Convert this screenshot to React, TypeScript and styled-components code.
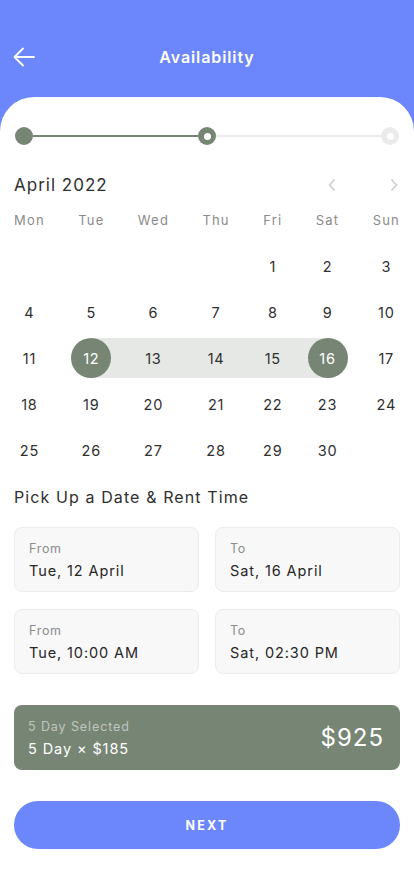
import styled, { createGlobalStyle } from "styled-components";

const BLUE = "#6c86fc";
const GREEN = "#768574";

const GlobalStyle = createGlobalStyle`
  * { box-sizing: border-box; }
  body {
    margin: 0;
    background: ${BLUE};
    font-family: Inter, "Noto Sans", sans-serif;
    color: #2b2b2b;
  }
`;

const Page = styled.div`
  width: 414px;
  min-height: 896px;
  background: ${BLUE};
  display: flex;
  flex-direction: column;
`;

const Header = styled.header`
  height: 97px;
  display: flex;
  align-items: center;
  justify-content: center;
  position: relative;
  padding-top: 17px;
`;

const BackButton = styled.button`
  position: absolute;
  left: 12px;
  top: 46px;
  width: 24px;
  height: 22px;
  padding: 0;
  border: none;
  background: transparent;
  display: flex;
  align-items: center;
  justify-content: center;
`;

const Title = styled.h1`
  margin: 0;
  font-size: 16px;
  font-weight: 600;
  letter-spacing: 0.9px;
  color: #fff;
`;

const Sheet = styled.main`
  flex: 1;
  background: #fff;
  border-radius: 34px 34px 0 0;
  padding: 29px 14px 40px;
`;

const Stepper = styled.div`
  display: flex;
  align-items: center;
  height: 20px;
  padding: 0 1px;
`;

const Dot = styled.span<{ $tone: "done" | "current" | "todo" }>`
  width: 18px;
  height: 18px;
  border-radius: 50%;
  flex-shrink: 0;
  display: flex;
  align-items: center;
  justify-content: center;
  background: ${(p) => (p.$tone === "todo" ? "#ebebeb" : GREEN)};
  &::after {
    content: "";
    width: 7px;
    height: 7px;
    border-radius: 50%;
    background: #fff;
    display: ${(p) => (p.$tone === "done" ? "none" : "block")};
  }
`;

const Line = styled.span<{ $done?: boolean }>`
  flex: 1;
  height: 2px;
  background: ${(p) => (p.$done ? GREEN : "#ebebeb")};
`;

const MonthRow = styled.div`
  display: flex;
  align-items: center;
  justify-content: space-between;
  margin-top: 29px;
`;

const MonthTitle = styled.h2`
  margin: 0;
  font-size: 17px;
  font-weight: 400;
  letter-spacing: 1px;
  color: #2f2f2f;
`;

const NavGroup = styled.div`
  display: flex;
  gap: 50px;
`;

const NavButton = styled.button`
  border: none;
  background: transparent;
  padding: 0;
  width: 12px;
  height: 14px;
  display: flex;
  align-items: center;
  justify-content: center;
`;

const Grid = styled.div`
  display: grid;
  grid-template-columns: repeat(7, auto);
  justify-content: space-between;
  grid-auto-rows: 46px;
  margin-top: 2px;
`;

const WeekDay = styled.div`
  font-size: 13px;
  letter-spacing: 1.2px;
  color: #8a8a8a;
  text-align: center;
  line-height: 46px;
`;

const Day = styled.div<{ $edge?: boolean; $band?: boolean }>`
  position: relative;
  display: flex;
  align-items: center;
  justify-content: center;
  font-size: 14.5px;
  letter-spacing: 0.8px;
  color: ${(p) => (p.$edge ? "#fff" : "#2f2f2f")};
  & > span {
    position: relative;
    z-index: 2;
  }
  &::before {
    content: "";
    display: ${(p) => (p.$edge ? "block" : "none")};
    position: absolute;
    width: 40px;
    height: 40px;
    border-radius: 50%;
    background: ${GREEN};
    left: 50%;
    top: 50%;
    transform: translate(-50%, -50%);
    z-index: 1;
  }
  &::after {
    content: "";
    display: ${(p) => (p.$band ? "block" : "none")};
    position: absolute;
    left: 50%;
    right: -50px;
    top: 50%;
    height: 40px;
    transform: translateY(-50%);
    background: #e6e8e5;
    z-index: 0;
  }
`;

const SectionTitle = styled.h3`
  margin: 14px 0 0;
  font-size: 16px;
  font-weight: 400;
  letter-spacing: 1.1px;
  color: #2f2f2f;
`;

const CardGrid = styled.div`
  display: grid;
  grid-template-columns: 1fr 1fr;
  column-gap: 16px;
  row-gap: 17px;
  margin-top: 20px;
`;

const InfoCard = styled.div`
  height: 65px;
  background: #f8f8f8;
  border: 1px solid #ececec;
  border-radius: 8px;
  padding: 13px 14px 0;
  display: flex;
  flex-direction: column;
  gap: 6px;
`;

const InfoLabel = styled.span`
  font-size: 12.5px;
  letter-spacing: 0.7px;
  color: #8c8c8c;
`;

const InfoValue = styled.span`
  font-size: 14.5px;
  letter-spacing: 0.9px;
  color: #262626;
`;

const Summary = styled.div`
  margin-top: 31px;
  height: 65px;
  background: ${GREEN};
  border-radius: 8px;
  padding: 0 16px 0 14px;
  display: flex;
  align-items: center;
  justify-content: space-between;
`;

const SummaryText = styled.div`
  display: flex;
  flex-direction: column;
  gap: 6px;
`;

const SummaryLabel = styled.span`
  font-size: 12.5px;
  letter-spacing: 0.9px;
  color: rgba(255, 255, 255, 0.55);
`;

const SummaryDetail = styled.span`
  font-size: 14.5px;
  letter-spacing: 0.9px;
  color: #fff;
`;

const Total = styled.span`
  font-size: 24px;
  letter-spacing: 1px;
  color: #fff;
`;

const NextButton = styled.button`
  margin-top: 31px;
  width: 100%;
  height: 48px;
  border: none;
  border-radius: 24px;
  background: ${BLUE};
  color: #fff;
  font-family: Inter, "Noto Sans", sans-serif;
  font-size: 12.5px;
  font-weight: 700;
  letter-spacing: 2.2px;
`;

const weekDays = ["Mon", "Tue", "Wed", "Thu", "Fri", "Sat", "Sun"];
const startOffset = 4;
const rangeStart = 12;
const rangeEnd = 16;

const cards = [
  { label: "From", value: "Tue, 12 April" },
  { label: "To", value: "Sat, 16 April" },
  { label: "From", value: "Tue, 10:00 AM" },
  { label: "To", value: "Sat, 02:30 PM" },
];

function App() {
  const cells: (number | null)[] = [];
  for (let i = 0; i < startOffset; i++) cells.push(null);
  for (let d = 1; d <= 30; d++) cells.push(d);

  return (
    <>
      <GlobalStyle />
      <Page>
        <Header>
          <BackButton aria-label="Back">
            <svg width="22" height="20" viewBox="0 0 22 20" fill="none">
              <path
                d="M21 10H2M10 1.5L1.5 10L10 18.5"
                stroke="#fff"
                strokeWidth="1.8"
                strokeLinecap="round"
                strokeLinejoin="round"
              />
            </svg>
          </BackButton>
          <Title>Availability</Title>
        </Header>
        <Sheet>
          <Stepper>
            <Dot $tone="done" />
            <Line $done />
            <Dot $tone="current" />
            <Line />
            <Dot $tone="todo" />
          </Stepper>

          <MonthRow>
            <MonthTitle>April 2022</MonthTitle>
            <NavGroup>
              <NavButton aria-label="Previous month">
                <svg width="8" height="14" viewBox="0 0 8 14" fill="none">
                  <path d="M6.5 1.5L1.5 7L6.5 12.5" stroke="#c9c9c9" strokeWidth="1.4" />
                </svg>
              </NavButton>
              <NavButton aria-label="Next month">
                <svg width="8" height="14" viewBox="0 0 8 14" fill="none">
                  <path d="M1.5 1.5L6.5 7L1.5 12.5" stroke="#c9c9c9" strokeWidth="1.4" />
                </svg>
              </NavButton>
            </NavGroup>
          </MonthRow>

          <Grid>
            {weekDays.map((w) => (
              <WeekDay key={w}>{w}</WeekDay>
            ))}
            {cells.map((d, i) => {
              if (d === null) return <Day key={`e${i}`} />;
              const edge = d === rangeStart || d === rangeEnd;
              const band = d >= rangeStart && d < rangeEnd;
              return (
                <Day key={d} $edge={edge} $band={band}>
                  <span>{d}</span>
                </Day>
              );
            })}
          </Grid>

          <SectionTitle>Pick Up a Date &amp; Rent Time</SectionTitle>
          <CardGrid>
            {cards.map((c, i) => (
              <InfoCard key={i}>
                <InfoLabel>{c.label}</InfoLabel>
                <InfoValue>{c.value}</InfoValue>
              </InfoCard>
            ))}
          </CardGrid>

          <Summary>
            <SummaryText>
              <SummaryLabel>5 Day Selected</SummaryLabel>
              <SummaryDetail>5 Day × $185</SummaryDetail>
            </SummaryText>
            <Total>$925</Total>
          </Summary>

          <NextButton>NEXT</NextButton>
        </Sheet>
      </Page>
    </>
  );
}

export default App;
